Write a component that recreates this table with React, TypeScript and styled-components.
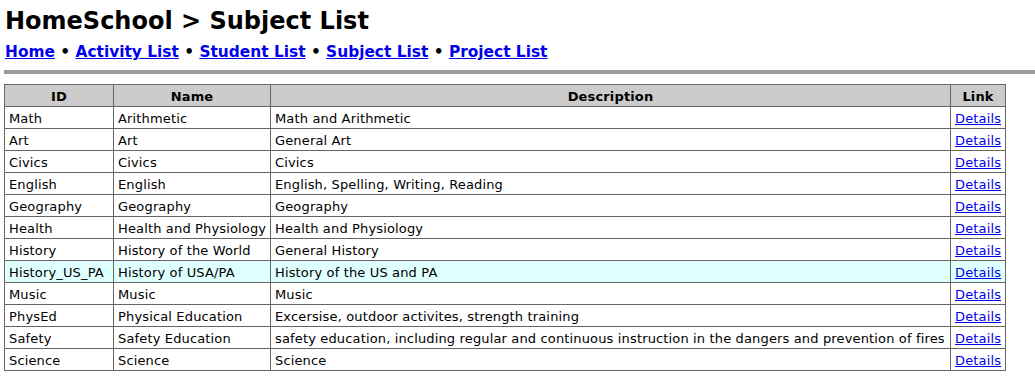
import React from "react";
import styled, { createGlobalStyle } from "styled-components";

const Global = createGlobalStyle`
  html, body { margin: 0; padding: 0; background: #fff; }
  body {
    padding: 4px;
    font-family: Verdana, "DejaVu Sans", sans-serif;
    color: #000;
  }
`;

const Page = styled.div`
  display: flex;
  flex-direction: column;
`;

const Title = styled.h1`
  margin: 2px 0 0 1px;
  font-size: 24px;
  line-height: 30px;
  font-weight: bold;
`;

const Nav = styled.nav`
  margin: 6px 0 0 1px;
  font-size: 15.4px;
  line-height: 20px;
  font-weight: bold;
  white-space: nowrap;
`;

const NavLink = styled.a`
  color: #0000ee;
  text-decoration: underline;
`;

const Rule = styled.div`
  height: 4px;
  background: #999;
  margin: 8px -4px 10px 0;
`;

const Table = styled.table`
  border-collapse: collapse;
  table-layout: fixed;
  width: 1002px;
  font-size: 13px;
  letter-spacing: 0.15px;
`;

const Th = styled.th`
  background: #ccc;
  border: 1px solid #666;
  padding: 2px 4px 0;
  height: 19px;
  line-height: 16px;
  font-weight: bold;
  text-align: center;
`;

const Row = styled.tr<{ $highlight?: boolean }>`
  background: ${(p) => (p.$highlight ? "#e0ffff" : "#fff")};
`;

const Td = styled.td`
  border: 1px solid #666;
  padding: 2px 4px 0;
  height: 19px;
  line-height: 16px;
  white-space: nowrap;
  overflow: hidden;
`;

const DetailLink = styled.a`
  color: #0000ee;
  text-decoration: underline;
`;

const rows: [string, string, string][] = [
  ["Math", "Arithmetic", "Math and Arithmetic"],
  ["Art", "Art", "General Art"],
  ["Civics", "Civics", "Civics"],
  ["English", "English", "English, Spelling, Writing, Reading"],
  ["Geography", "Geography", "Geography"],
  ["Health", "Health and Physiology", "Health and Physiology"],
  ["History", "History of the World", "General History"],
  ["History_US_PA", "History of USA/PA", "History of the US and PA"],
  ["Music", "Music", "Music"],
  ["PhysEd", "Physical Education", "Excersise, outdoor activites, strength training"],
  ["Safety", "Safety Education", "safety education, including regular and continuous instruction in the dangers and prevention of fires"],
  ["Science", "Science", "Science"],
];

const navItems = ["Home", "Activity List", "Student List", "Subject List", "Project List"];

export default function App() {
  return (
    <Page>
      <Global />
      <Title>HomeSchool &gt; Subject List</Title>
      <Nav>
        {navItems.map((n, i) => (
          <React.Fragment key={n}>
            {i > 0 && " \u2022 "}
            <NavLink href="#">{n}</NavLink>
          </React.Fragment>
        ))}
      </Nav>
      <Rule />
      <Table>
        <colgroup>
          <col style={{ width: 109 }} />
          <col style={{ width: 157 }} />
          <col style={{ width: 680 }} />
          <col style={{ width: 55 }} />
        </colgroup>
        <thead>
          <tr>
            <Th>ID</Th>
            <Th>Name</Th>
            <Th>Description</Th>
            <Th>Link</Th>
          </tr>
        </thead>
        <tbody>
          {rows.map(([id, name, desc]) => (
            <Row key={id} $highlight={id === "History_US_PA"}>
              <Td>{id}</Td>
              <Td>{name}</Td>
              <Td>{desc}</Td>
              <Td>
                <DetailLink href="#">Details</DetailLink>
              </Td>
            </Row>
          ))}
        </tbody>
      </Table>
    </Page>
  );
}
